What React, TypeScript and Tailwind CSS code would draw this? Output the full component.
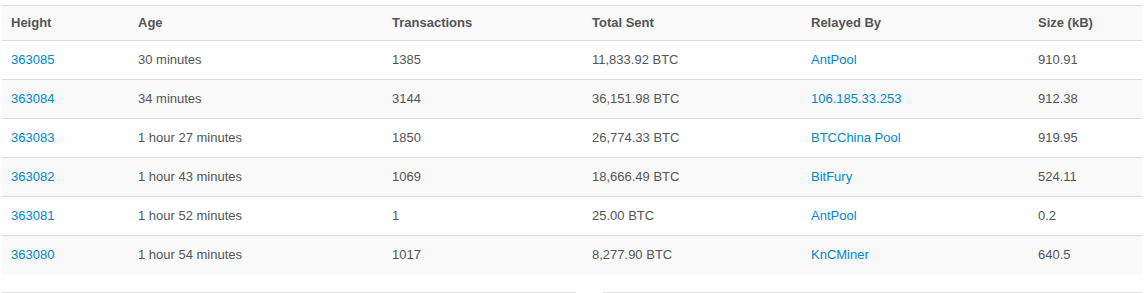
const blocks = [
    { height: '363085', age: '30 minutes', tx: '1385', sent: '11,833.92 BTC', relay: 'AntPool', size: '910.91' },
    { height: '363084', age: '34 minutes', tx: '3144', sent: '36,151.98 BTC', relay: '106.185.33.253', size: '912.38' },
    { height: '363083', age: '1 hour 27 minutes', tx: '1850', sent: '26,774.33 BTC', relay: 'BTCChina Pool', size: '919.95' },
    { height: '363082', age: '1 hour 43 minutes', tx: '1069', sent: '18,666.49 BTC', relay: 'BitFury', size: '524.11' },
    { height: '363081', age: '1 hour 52 minutes', tx: '1', sent: '25.00 BTC', relay: 'AntPool', size: '0.2' },
    { height: '363080', age: '1 hour 54 minutes', tx: '1017', sent: '8,277.90 BTC', relay: 'KnCMiner', size: '640.5' },
];

const cols = ['w-[127px]', 'w-[254px]', 'w-[200px]', 'w-[219px]', 'w-[227px]', ''];

export default function App() {
    return (
        <div className="w-[1144px] h-[293px] bg-white px-[2px] pt-[5px] text-[13px] text-[#555] font-['Liberation_Sans',Arial,sans-serif] overflow-hidden">
            {/* Blocks table */}
            <table className="w-full border-collapse table-fixed">
                <colgroup>
                    {cols.map((c, i) => (
                        <col key={i} className={c} />
                    ))}
                </colgroup>
                <thead>
                    <tr className="bg-[#f9f9f9] border-t border-b border-[#ddd]">
                        {['Height', 'Age', 'Transactions', 'Total Sent', 'Relayed By', 'Size (kB)'].map((h) => (
                            <th key={h} className="text-left font-bold px-[9px] py-[7px] leading-5">
                                {h}
                            </th>
                        ))}
                    </tr>
                </thead>
                <tbody>
                    {blocks.map((b, i) => (
                        <tr key={b.height} className={`border-t border-[#ddd] first:border-t-0 ${i % 2 === 1 ? 'bg-[#f9f9f9]' : 'bg-white'}`}>
                            <td className="px-[9px] py-[9px] leading-5">
                                <a className="text-[#0088cc]">{b.height}</a>
                            </td>
                            <td className="px-[9px] py-[9px] leading-5">{b.age}</td>
                            <td className="px-[9px] py-[9px] leading-5">{b.tx}</td>
                            <td className="px-[9px] py-[9px] leading-5">{b.sent}</td>
                            <td className="px-[9px] py-[9px] leading-5">
                                <a className="text-[#0088cc]">{b.relay}</a>
                            </td>
                            <td className="px-[9px] py-[9px] leading-5">{b.size}</td>
                        </tr>
                    ))}
                </tbody>
            </table>

            {/* Next panels */}
            <div className="flex gap-[27px] mt-[18px]">
                <div className="w-[574px] border-t border-[#ddd]" />
                <div className="flex-1 border-t border-[#ddd]" />
            </div>
        </div>
    );
}
